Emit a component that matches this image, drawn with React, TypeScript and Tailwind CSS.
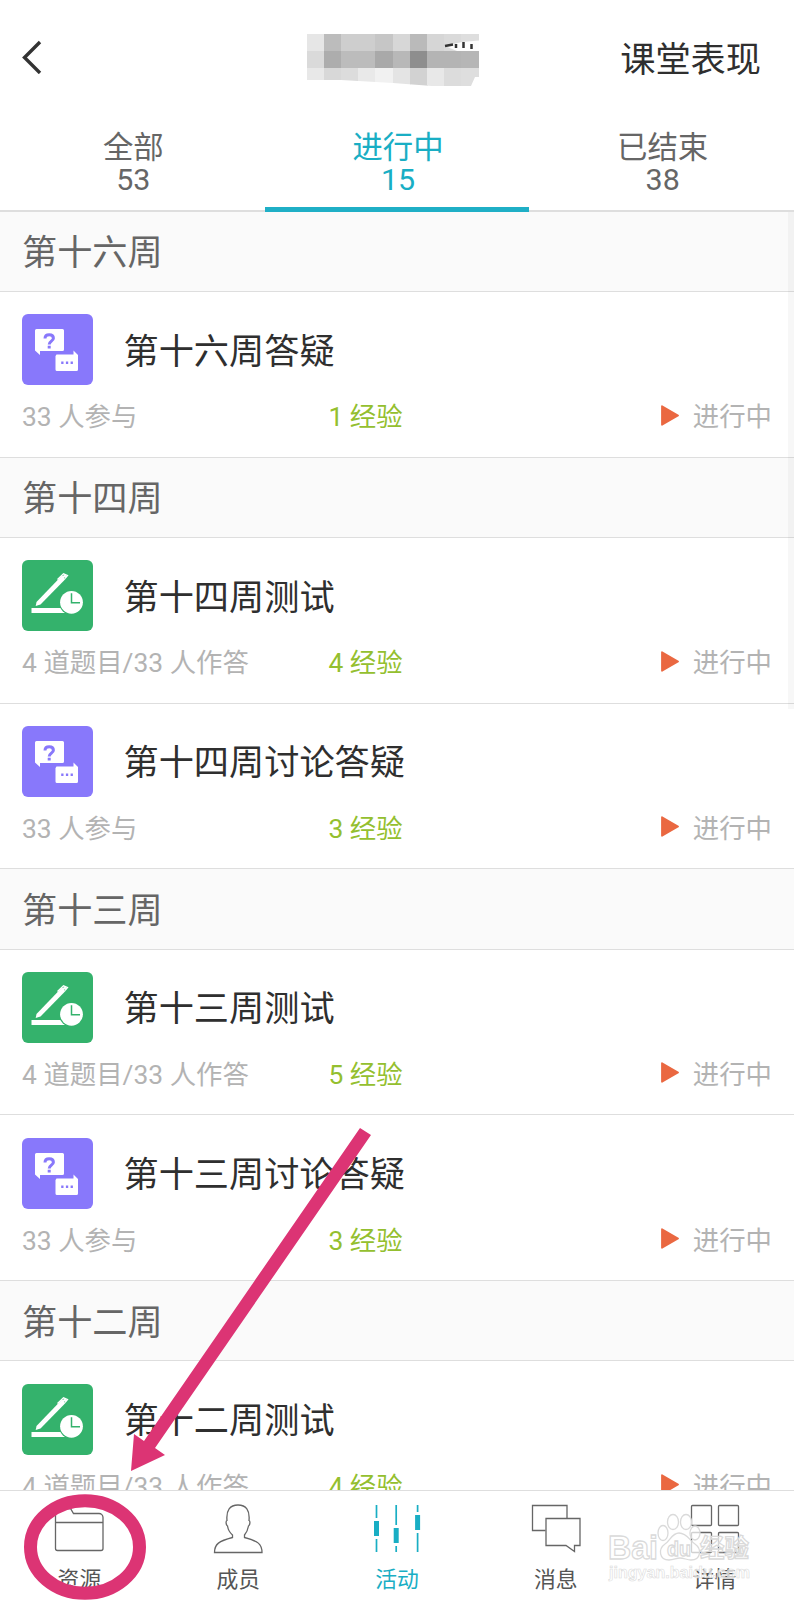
type Kind = "discuss" | "quiz";

interface Activity {
  kind: Kind;
  title: string;
  meta: string;
  exp: number;
}

interface Week {
  name: string;
  items: Activity[];
}

const discuss = (title: string, exp: number): Activity => ({
  kind: "discuss",
  title,
  meta: "33 人参与",
  exp,
});

const quiz = (title: string, exp: number): Activity => ({
  kind: "quiz",
  title,
  meta: "4 道题目/33 人作答",
  exp,
});

const weeks: Week[] = [
  { name: "第十六周", items: [discuss("第十六周答疑", 1)] },
  { name: "第十四周", items: [quiz("第十四周测试", 4), discuss("第十四周讨论答疑", 3)] },
  { name: "第十三周", items: [quiz("第十三周测试", 5), discuss("第十三周讨论答疑", 3)] },
  { name: "第十二周", items: [quiz("第十二周测试", 4)] },
];

const tabs = [
  { label: "全部", count: 53 },
  { label: "进行中", count: 15, active: true },
  { label: "已结束", count: 38 },
];

function DiscussIcon() {
  return (
    <svg viewBox="0 0 71 71" className="size-[71px] shrink-0">
      <rect width="71" height="71" rx="6" fill="#8878fb" />
      <path d="M14.5 15H40.5a1.5 1.5 0 0 1 1.5 1.5V35.5a1.5 1.5 0 0 1-1.5 1.5H18V41L13 36.5V16.5a1.5 1.5 0 0 1 1.5-1.5Z" fill="#fff" />
      <path d="M34.5 40.5H51.5V36.5L56 41V55.5a1.5 1.5 0 0 1-1.5 1.5H35a1.5 1.5 0 0 1-1.5-1.5V42Z" fill="#fff" />
      <path d="M23 24.5c0-2.4 1.6-3.7 4.2-3.7s4.2 1.3 4.2 3.4c0 2.9-4.2 3.1-4.2 6.3" fill="none" stroke="#8878fb" strokeWidth="3" />
      <path d="M25.7 31.7h3v2.7h-3zM39.2 47.6h2.300v2.300h-2.300zM43.900 47.600h2.300v2.300h-2.300zM48.600 47.600h2.300v2.300h-2.300z" fill="#8878fb" />
    </svg>
  );
}

function QuizIcon() {
  return (
    <svg viewBox="0 0 71 71" className="size-[71px] shrink-0">
      <rect width="71" height="71" rx="6" fill="#34b26c" />
      <path d="M13.7 46 14.5 42 39.5 16 43.5 19 18.5 44.5Z" fill="#fff" />
      <path d="M35.500 19.500 41.500 13.800 45.500 15.500 43 18.500" fill="none" stroke="#fff" strokeWidth="1.300" />
      <path d="M40 17.500 44 15.500" stroke="#fff" strokeWidth="2.500" />
      <path d="M9.500 48H43V53H9.500Z" fill="#fff" />
      <circle cx="49.500" cy="42.300" r="12.500" fill="#34b26c" />
      <circle cx="49.500" cy="42.300" r="11.400" fill="#fff" />
      <path d="M49.500 33.300V42.700H58" fill="none" stroke="#34b26c" strokeWidth="1.500" />
    </svg>
  );
}

function ActivityRow({ kind, title, meta, exp }: Activity) {
  return (
    <li className="flex h-[165.8px] flex-col border-b border-[#dedede] bg-white px-[22px] pt-[22.4px]">
      <div className="flex items-center gap-[30.5px]">
        {kind === "discuss" ? <DiscussIcon /> : <QuizIcon />}
        <h3 className="pt-[4px] text-[35.2px] leading-[40px] text-[#2f2f2f]">{title}</h3>
      </div>
      <div className="mt-[12px] flex text-[26.4px] leading-[40px] text-[#b3b3b3]">
        <span className="w-[306.4px]">{meta}</span>
        <span className="flex-1 text-[#94bf2f]">{exp} 经验</span>
        <span className="flex items-center gap-[14px]">
          <svg viewBox="0 0 18 21" className="mb-[4px] h-[21px] w-[18px]">
            <path d="M1 1.2 17 10.5 1 19.8Z" fill="#ea6841" stroke="#ea6841" strokeWidth="1.8" strokeLinejoin="round" />
          </svg>
          进行中
        </span>
      </div>
    </li>
  );
}

// 课程名称的马赛克色块
function MaskedTitle() {
  const rows = [
    ["#e6e6e6", "#bcbcbc", "#cecece", "#cecece", "#c6c6c6", "#d7d7d7", "#bababa", "#d6d6d6", "#dadada", "#dedede"],
    ["#dadada", "#adadad", "#bcbcbc", "#bcbcbc", "#a9a9a9", "#b8b8b8", "#8e8e8e", "#b4b4b4", "#b4b4b4", "#b6b6b6"],
    ["#e8e8e8", "#d8d8d8", "#dcdcdc", "#e9e9e9", "#f1f1f1", "#e4e4e4", "#d2d2d2", "#e8e8e8", "#dcdcdc", "#dedede"],
  ];
  return (
    <svg viewBox="0 0 172 52" className="mt-[2px] -ml-[4px] h-[52px] w-[172px]">
      <clipPath id="mask-edge">
        <path d="M0 0H172V43H168L164 52H125L86 49 34 46H0Z" />
      </clipPath>
      <g clipPath="url(#mask-edge)" shapeRendering="crispEdges">
        {rows.map((row, y) =>
          row.map((fill, x) => (
            <rect key={`${x}-${y}`} x={x * 17.1} y={y * 17.2} width="18" height="18" fill={fill} />
          )),
        )}
      </g>
      <path d="M138 12 155 8 172 6.5V17H150Z" fill="#fdfdfd" />
      <path d="M138 12 146 10.5M149 10V14M156.5 8V14M164.5 10V15" stroke="#333" strokeWidth="2.5" />
    </svg>
  );
}

function FolderIcon() {
  return (
    <svg viewBox="0 0 50 50" className="size-[50px]" fill="none" stroke="#666" strokeWidth="1.3">
      <path d="M1.5 18.5H49M1.5 4.5V44.5a2 2 0 0 0 2 2H47a2 2 0 0 0 2-2V13.5a4 4 0 0 0-4-4H19.5L16.5 4.5Z" />
    </svg>
  );
}

function MemberIcon() {
  return (
    <svg viewBox="0 0 50 50" className="size-[50px]" fill="none" stroke="#666" strokeWidth="1.3">
      <path d="M1.5 48.500H49C49 40 45 37 31.500 33.500V31C34 28 35 25 35.500 22C37 21 37.500 17 36 16.500C37 6 33 1 25 1S13 6 14 16.500C12.500 17 13 21 14.500 22C15 25 16 28 19.500 31V33.500C6 37 1.500 40 1.500 48.500Z" />
    </svg>
  );
}

function ActivityIcon() {
  return (
    <svg viewBox="0 0 50 50" className="size-[50px]" stroke="#19aec4">
      <path d="M4.5 1V14M4.5 35V48M24.2 1V21M24.2 42V48M45.6 1V8M45.6 29V48" strokeWidth="1.7" />
      <path d="M4.5 17V32M24.2 24V39M45.6 11V26" strokeWidth="5" />
    </svg>
  );
}

function MessageIcon() {
  return (
    <svg viewBox="0 0 50 50" className="size-[50px]" fill="none" stroke="#666" strokeWidth="1.3">
      <path d="M14.5 26.5H1.5V1.5H36V14.5" />
      <path d="M15 14.5H49V41.5H43.5V47.5L35 41.5H15Z" />
    </svg>
  );
}

function DetailIcon() {
  return (
    <svg viewBox="0 0 50 50" className="size-[50px]" fill="none" stroke="#666" strokeWidth="1.3">
      <rect x="1.5" y="1.5" width="20" height="20" rx="1" />
      <rect x="28.5" y="1.5" width="20" height="20" rx="1" />
      <rect x="1.5" y="28.5" width="20" height="20" rx="1" />
      <rect x="28.5" y="28.5" width="20" height="20" rx="1" />
    </svg>
  );
}

const navItems = [
  { label: "资源", Icon: FolderIcon },
  { label: "成员", Icon: MemberIcon },
  { label: "活动", Icon: ActivityIcon, active: true },
  { label: "消息", Icon: MessageIcon },
  { label: "详情", Icon: DetailIcon },
];

function Watermark() {
  return (
    <svg
      viewBox="0 0 150 80"
      className="absolute top-[1506px] left-[604px] h-[80px] w-[150px]"
      fill="#fff"
      fillOpacity="0.7"
      stroke="#dadada"
      strokeWidth="1.3"
      fontFamily="'Liberation Sans', 'Noto Sans CJK SC', sans-serif"
      fontWeight="700"
    >
      <text x="4" y="53" fontSize="34" textLength="50" lengthAdjust="spacingAndGlyphs">Bai</text>
      <ellipse cx="59" cy="27" rx="5" ry="7.5" />
      <ellipse cx="69" cy="16" rx="5.5" ry="7.5" />
      <ellipse cx="82" cy="16" rx="5.5" ry="7.5" />
      <ellipse cx="91" cy="27" rx="5" ry="7" />
      <path d="M75 27C68 27 66 35 61 38C54 43 55 54 65 54C70 54 72 52 76 52S83 54 87 54C97 54 98 43 91 38C86 35 83 27 75 27Z" />
      <text x="63" y="50" fontSize="21" textLength="24" lengthAdjust="spacingAndGlyphs">du</text>
      <text x="96" y="51" fontSize="24.5">经验</text>
      <text x="5" y="72" fontSize="17" strokeWidth="0.6" textLength="141" lengthAdjust="spacingAndGlyphs">jingyan.baidu.com</text>
    </svg>
  );
}

export default function App() {
  return (
    <div className="relative flex h-[1600px] w-[794px] flex-col overflow-hidden bg-white font-['Roboto','Noto_Sans_CJK_SC',sans-serif]">
      <header className="grid h-[118px] shrink-0 grid-cols-[1fr_172px_1fr] items-center">
        <svg viewBox="0 0 20 34" className="mt-[-4px] ml-[21.5px] h-[34px] w-[20px]" fill="none" stroke="#333" strokeWidth="3.4">
          <path d="M18 2 2.500 17.500 18 33" />
        </svg>
        <MaskedTitle />
        <span className="pt-[1px] pr-[33px] text-right text-[35.2px] leading-[40px] text-[#2f2f2f]">课堂表现</span>
      </header>

      <nav className="grid h-[93.6px] shrink-0 grid-cols-3 text-center text-[30.4px] leading-[32.5px]">
        {tabs.map(({ label, count, active }) => (
          <div
            key={label}
            className={
              active
                ? "border-b-[5px] border-[#1fafc6] pt-[13.5px] pl-[2px] text-[#19aec4]"
                : "border-b-2 border-[#dedede] pt-[13.5px] pl-[2px] text-[#666]"
            }
          >
            <div>{label}</div>
            <div>{count}</div>
          </div>
        ))}
      </nav>

      <main className="min-h-0 flex-1 overflow-hidden">
        {weeks.map((week) => (
          <section key={week.name}>
            <h2 className="flex h-[80.2px] items-center border-b border-[#dedede] bg-[#fafafa] px-[22px] pt-[5px] text-[35.2px] text-[#666]">
              {week.name}
            </h2>
            <ul>
              {week.items.map((item) => (
                <ActivityRow key={item.title} {...item} />
              ))}
            </ul>
          </section>
        ))}
      </main>

      <footer className="grid h-[110px] shrink-0 grid-cols-5 border-t border-[#dedede] bg-white">
        {navItems.map(({ label, Icon, active }) => (
          <div
            key={label}
            className={active ? "flex flex-col items-center pt-[13px] text-[#19aec4]" : "flex flex-col items-center pt-[13px] text-[#555]"}
          >
            <Icon />
            <span className="mt-[10px] text-[21.8px] leading-[32px]">{label}</span>
          </div>
        ))}
      </footer>

      <div className="absolute top-[212px] right-0 h-[497px] w-[6px] bg-black/[0.03]" />
      <Watermark />
      <svg viewBox="0 0 794 1600" className="pointer-events-none absolute inset-0 h-[1600px] w-[794px]">
        <path d="M360 1128 371 1135 155 1448 165 1455 131 1471 134 1434 144 1441Z" fill="#dc3474" />
        <ellipse cx="85" cy="1547" rx="54.5" ry="46.3" fill="none" stroke="#dc3474" strokeWidth="13" />
      </svg>
    </div>
  );
}
